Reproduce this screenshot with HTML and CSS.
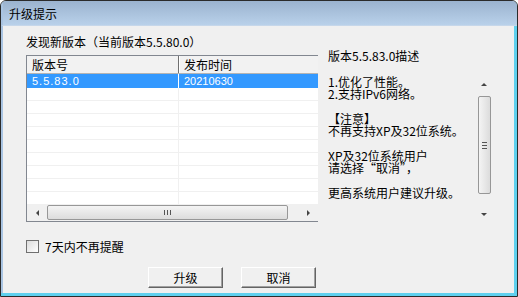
FILE: index.html
```html
<!DOCTYPE html>
<html lang="zh-CN">
  <head>
    <meta charset="UTF-8" />
    <link rel="stylesheet" href="styles.css">
  </head>
  <body>
    <div class="window">
      <div class="titlebar">升级提示</div>
      <div class="body">
        <div class="main">
          <div class="left">
            <div class="caption">发现新版本（当前版本5.5.80.0）</div>
            <div class="listbox">
              <div class="list-head">
                <div class="cell col-ver">版本号</div>
                <div class="cell col-date">发布时间</div>
              </div>
              <div class="list-rows">
                <div class="row selected"><div class="cell col-ver">5.5.83.0</div><div class="cell col-date">20210630</div></div>
                <div class="row"><div class="cell col-ver"></div><div class="cell col-date"></div></div>
                <div class="row"><div class="cell col-ver"></div><div class="cell col-date"></div></div>
                <div class="row"><div class="cell col-ver"></div><div class="cell col-date"></div></div>
                <div class="row"><div class="cell col-ver"></div><div class="cell col-date"></div></div>
                <div class="row"><div class="cell col-ver"></div><div class="cell col-date"></div></div>
                <div class="row"><div class="cell col-ver"></div><div class="cell col-date"></div></div>
                <div class="row"><div class="cell col-ver"></div><div class="cell col-date"></div></div>
                <div class="row"><div class="cell col-ver"></div><div class="cell col-date"></div></div>
                <div class="row"><div class="cell col-ver"></div><div class="cell col-date"></div></div>
              </div>
              <div class="hscroll">
                <div class="arrow"><span class="tri tri-left"></span></div>
                <div class="hthumb"><span class="grip-h"></span></div>
                <div class="arrow"><span class="tri tri-right"></span></div>
              </div>
            </div>
          </div>
          <div class="right">
            <div class="caption">版本5.5.83.0描述</div>
            <div class="desc">
              <div class="desc-text">1.优化了性能。
2.支持IPv6网络。

【注意】
不再支持XP及32位系统。

XP及32位系统用户
请选择“取消”，

更高系统用户建议升级。</div>
              <div class="vscroll">
                <div class="varrow"><span class="tri tri-up"></span></div>
                <div class="vthumb"><span class="grip-v"></span></div>
                <div class="varrow"><span class="tri tri-down"></span></div>
              </div>
            </div>
          </div>
        </div>
        <label class="check"><span class="box"></span>7天内不再提醒</label>
        <div class="buttons">
          <button class="btn">升级</button>
          <button class="btn">取消</button>
        </div>
      </div>
    </div>
  </body>
</html>
```

FILE: styles.css
```css
/* 整体窗口 */
body {
  margin: 0;
  font-family: "Noto Sans CJK SC", "DejaVu Sans", sans-serif;
  font-size: 12px;
  color: #000;
}

.window {
  width: 518px;
  height: 297px;
  box-sizing: border-box;
  border: 1px solid #2b2b2b;
  border-radius: 6px 6px 0 0;
  background: #f0f0f0;
  display: flex;
  flex-direction: column;
  overflow: hidden;
  box-shadow: inset -3px -3px 0 #5fd0ee, inset 2px 0 0 #a9c4e2;
}

/* 标题栏 */
.titlebar {
  height: 24px;
  line-height: 26px;
  padding-left: 6px;
  background: linear-gradient(#9bb3cf, #b9d1ea);
  border-bottom: 1px solid #c6d7ea;
  border-left: 2px solid #a9c4e2;
  flex-shrink: 0;
}

.body {
  padding: 8px 0 0 25px;
}

.main {
  display: flex;
}

.left {
  width: 292px;
}

.caption {
  line-height: 16px;
  height: 16px;
  margin-bottom: 5px;
  white-space: nowrap;
}

/* 版本列表 */
.listbox {
  height: 167px;
  box-sizing: border-box;
  border: 1px solid #828790;
  border-right: none;
  background: #fff;
  display: flex;
  flex-direction: column;
  overflow: hidden;
}

.list-head {
  display: flex;
  height: 17px;
  line-height: 17px;
  background: #f2f2f2;
  border-bottom: 1px solid #b4b4b4;
  flex-shrink: 0;
}

.list-head .col-ver {
  border-right: 1px solid #707070;
  box-shadow: 1px 0 0 #fff;
}

.cell {
  padding-left: 5px;
  box-sizing: border-box;
  white-space: nowrap;
}

.col-ver {
  width: 152px;
}

.col-date {
  flex: 1;
}

.list-rows {
  flex: 1;
  overflow: hidden;
}

.row {
  display: flex;
  height: 12px;
  border-bottom: 1px solid #f0f0f0;
}

.row .col-ver {
  border-right: 1px solid #f0f0f0;
}

.row.selected {
  background: #3399ff;
  color: #fff;
  height: 14px;
  line-height: 14px;
  border-bottom: none;
  font-family: "Liberation Sans", sans-serif;
  font-size: 11px;
}

.row.selected .col-ver {
  border-right-color: #fff;
  letter-spacing: 1px;
}

/* 横向滚动条 */
.hscroll {
  height: 17px;
  display: flex;
  align-items: center;
  background: #f0f0f0;
  flex-shrink: 0;
}

.arrow {
  width: 20px;
  display: flex;
  justify-content: center;
}

.hthumb {
  flex: 1;
  height: 13px;
  margin-right: 10px;
  border: 1px solid #979797;
  border-radius: 2px;
  background: linear-gradient(#f4f4f4, #dcdcdc);
  display: flex;
  justify-content: center;
  align-items: center;
}

.grip-h {
  width: 7px;
  height: 5px;
  background: repeating-linear-gradient(90deg, #555 0 1px, transparent 1px 3px);
}

.tri {
  width: 0;
  height: 0;
  border: 3px solid transparent;
}

.tri-left {
  border-right: 3px solid #444;
  border-left: 0;
}

.tri-right {
  border-left: 3px solid #444;
  border-right: 0;
}

.tri-up {
  border-bottom: 3px solid #444;
  border-top: 0;
}

.tri-down {
  border-top: 3px solid #444;
  border-bottom: 0;
}

/* 版本描述 */
.right {
  margin-left: 10px;
  padding-top: 14px;
  width: 164px;
}

.right .caption {
  margin-bottom: 10px;
}

.desc {
  display: flex;
  height: 150px;
}

.desc-text {
  flex: 1;
  white-space: pre;
  line-height: 12.3px;
  padding-top: 2px;
}

.vscroll {
  width: 16px;
  display: flex;
  flex-direction: column;
  align-items: center;
  background: #f0f0f0;
}

.varrow {
  height: 20px;
  display: flex;
  align-items: center;
}

.vthumb {
  flex: 1;
  width: 13px;
  box-sizing: border-box;
  border: 1px solid #979797;
  border-radius: 2px;
  background: linear-gradient(90deg, #f4f4f4, #dcdcdc);
  display: flex;
  justify-content: center;
  align-items: center;
  margin: 2px 0 10px;
}

.grip-v {
  width: 5px;
  height: 7px;
  background: repeating-linear-gradient(#555 0 1px, transparent 1px 3px);
}

/* 复选框 */
.check {
  display: flex;
  align-items: center;
  gap: 6px;
  margin-top: 15px;
  height: 14px;
}

.box {
  width: 11px;
  height: 11px;
  border: 1px solid #707070;
  background: linear-gradient(135deg, #dcdcdc, #fff);
}

/* 按钮 */
.buttons {
  display: flex;
  gap: 18px;
  padding-left: 122px;
  margin-top: 14px;
}

.btn {
  width: 75px;
  height: 21px;
  padding: 0;
  font: inherit;
  background: #f0f0f0;
  border: 1px solid;
  border-color: #fff #646464 #646464 #fff;
  box-shadow: inset -1px -1px 0 #a0a0a0;
}
```
